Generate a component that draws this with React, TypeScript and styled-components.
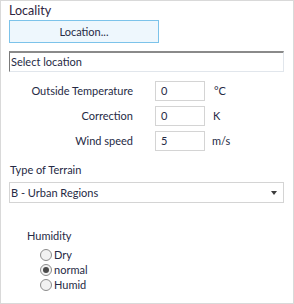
import { Fragment } from "react";
import styled, { createGlobalStyle } from "styled-components";

const GlobalStyle = createGlobalStyle`
  html, body {
    margin: 0;
    padding: 0;
    background: #ffffff;
  }
  body {
    font-family: Lato, "Open Sans", sans-serif;
    color: #262a45;
  }
`;

const Panel = styled.div`
  width: 294px;
  height: 304px;
  box-sizing: border-box;
  border: 1px solid #d9d9d9;
  padding: 2px 9px 0 8px;
  display: flex;
  flex-direction: column;
  font-size: 11px;
  line-height: 16px;
`;

const Title = styled.div`
  height: 16px;
  font-size: 12.5px;
  color: #2e2440;
`;

const LocationButton = styled.div`
  margin-top: 1px;
  width: 150px;
  height: 23px;
  box-sizing: border-box;
  border: 1px solid #7cc3ea;
  background: #eef7fd;
  display: flex;
  align-items: center;
  justify-content: center;
`;

const LocationField = styled.div`
  margin-top: 8px;
  height: 21px;
  box-sizing: border-box;
  border-top: 2px solid #8a8a8a;
  border-left: 1px solid #7a7a7a;
  border-right: 1px solid #e1e6ec;
  border-bottom: 1px solid #e1e6ec;
  display: flex;
  align-items: center;
  padding-left: 1px;
`;

const ValueGrid = styled.div`
  margin-top: 9px;
  display: grid;
  grid-template-columns: 146px 50px 1fr;
  grid-auto-rows: 20px;
  row-gap: 5px;
  align-items: center;
`;

const FieldLabel = styled.div`
  text-align: right;
  white-space: nowrap;
  padding-right: 22px;
`;

const ValueBox = styled.div`
  width: 50px;
  height: 20px;
  box-sizing: border-box;
  border: 1px solid #d4d4d4;
  display: flex;
  align-items: center;
  padding-left: 5px;
`;

const Unit = styled.div<{ $offset: number }>`
  margin-left: ${(p) => 8 + p.$offset}px;
  white-space: nowrap;
`;

const SectionLabel = styled.div<{ $top: number; $indent?: number }>`
  margin-top: ${(p) => p.$top}px;
  margin-left: ${(p) => p.$indent ?? 1}px;
  height: 16px;
`;

const TerrainSelect = styled.div`
  margin-top: 4px;
  height: 21px;
  box-sizing: border-box;
  border: 1px solid #d4d4d4;
  display: flex;
  align-items: center;
  justify-content: space-between;
  padding: 0 6px 0 1px;
`;

const Arrow = styled.span`
  width: 0;
  height: 0;
  border-left: 3px solid transparent;
  border-right: 3px solid transparent;
  border-top: 4px solid #3c3c3c;
`;

const RadioGroup = styled.div`
  margin-top: 3px;
  margin-left: 31px;
  display: flex;
  flex-direction: column;
`;

const RadioRow = styled.div`
  height: 15px;
  line-height: 15px;
  display: flex;
  align-items: center;
  gap: 2px;
`;

const RadioCircle = styled.span<{ $checked?: boolean }>`
  flex-shrink: 0;
  width: 12px;
  height: 12px;
  box-sizing: border-box;
  border-radius: 50%;
  border: 1px solid #8c8c8c;
  background: #f2f2f2;
  display: flex;
  align-items: center;
  justify-content: center;
  &::after {
    content: "";
    width: 6px;
    height: 6px;
    border-radius: 50%;
    background: ${(p) => (p.$checked ? "#4a4a4a" : "transparent")};
  }
`;

const rows = [
  { label: "Outside Temperature", value: "0", unit: "°C", offset: 1 },
  { label: "Correction", value: "0", unit: "K", offset: 0 },
  { label: "Wind speed", value: "5", unit: "m/s", offset: -1 },
];

const humidity = [
  { label: "Dry", checked: false },
  { label: "normal", checked: true },
  { label: "Humid", checked: false },
];

export default function App() {
  return (
    <>
      <GlobalStyle />
      <Panel>
        <Title>Locality</Title>
        <LocationButton>Location...</LocationButton>
        <LocationField>Select location</LocationField>
        <ValueGrid>
          {rows.map((r) => (
            <Fragment key={r.label}>
              <FieldLabel>{r.label}</FieldLabel>
              <ValueBox>{r.value}</ValueBox>
              <Unit $offset={r.offset}>{r.unit}</Unit>
            </Fragment>
          ))}
        </ValueGrid>
        <SectionLabel $top={11}>Type of Terrain</SectionLabel>
        <TerrainSelect>
          <span>B - Urban Regions</span>
          <Arrow />
        </TerrainSelect>
        <SectionLabel $top={25} $indent={18}>
          Humidity
        </SectionLabel>
        <RadioGroup>
          {humidity.map((h) => (
            <RadioRow key={h.label}>
              <RadioCircle $checked={h.checked} />
              <span>{h.label}</span>
            </RadioRow>
          ))}
        </RadioGroup>
      </Panel>
    </>
  );
}
